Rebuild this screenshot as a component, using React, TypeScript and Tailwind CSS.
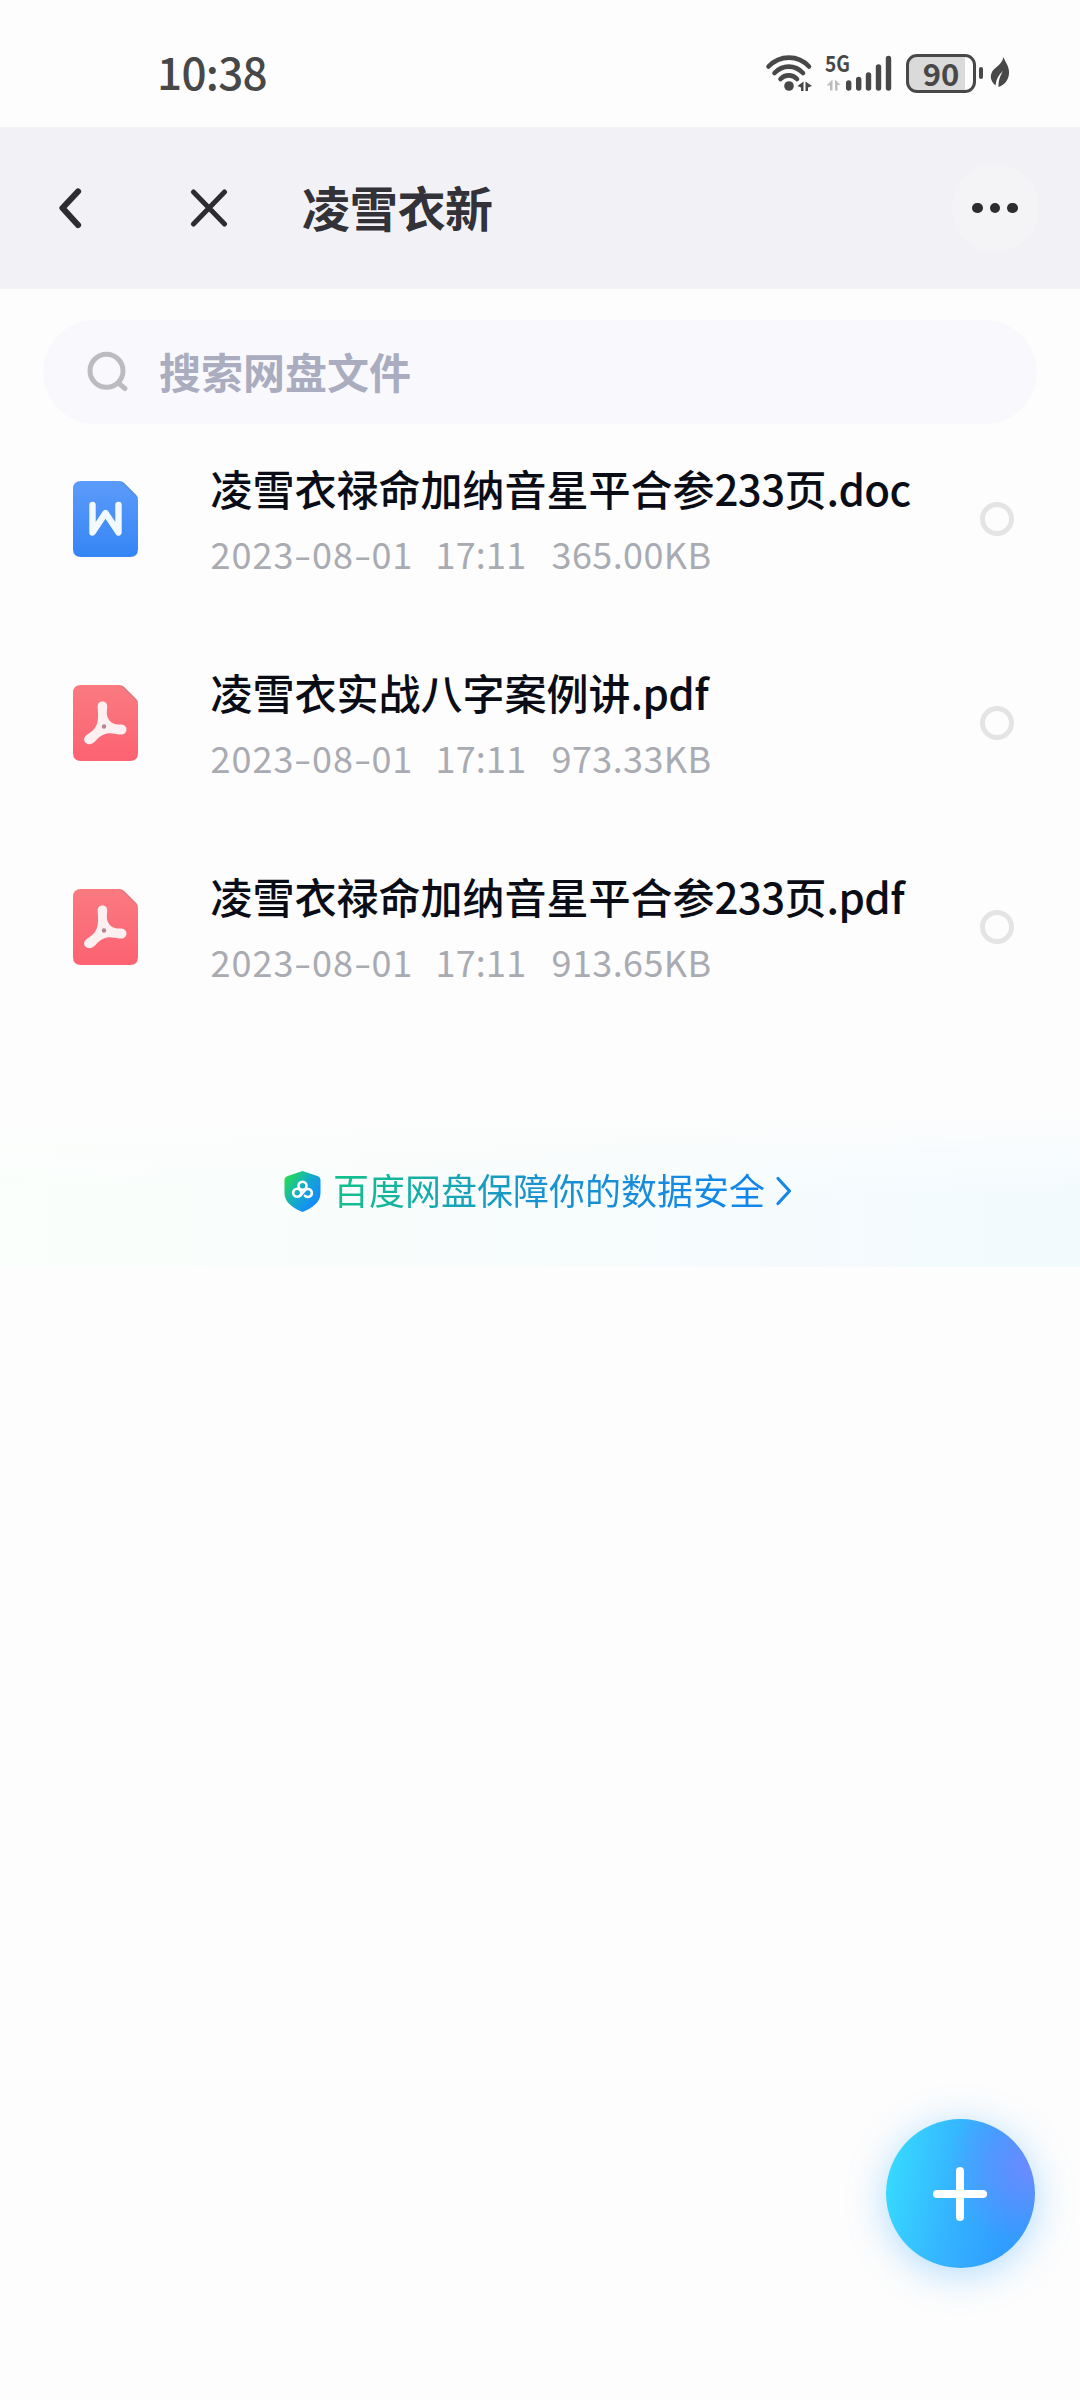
import React from 'react';

interface FileItem {
  name: string;
  kind: 'doc' | 'pdf';
  date: string;
  time: string;
  size: string;
}

const files: FileItem[] = [
  { name: '凌雪衣禄命加纳音星平合参233页.doc', kind: 'doc', date: '2023-08-01', time: '17:11', size: '365.00KB' },
  { name: '凌雪衣实战八字案例讲.pdf', kind: 'pdf', date: '2023-08-01', time: '17:11', size: '973.33KB' },
  { name: '凌雪衣禄命加纳音星平合参233页.pdf', kind: 'pdf', date: '2023-08-01', time: '17:11', size: '913.65KB' },
];

const WifiIcon = () => (
  <svg width="48" height="38" viewBox="0 0 48 38" fill="none" stroke="#484848" strokeWidth="4.6" strokeLinecap="round">
    <path d="M3.5 12.5C15 .6 33 .6 44 12.5" />
    <path d="M9.5 19C17.5 10.5 30 10.5 38 19" />
    <path d="M15.5 25C20 20.2 27.5 20.2 32 25" />
    <circle cx="24" cy="32" r="4.8" fill="#484848" stroke="none" />
    <path d="M38.500 27.500v9.500H36v-3.500l-3.500-1.500zM40.500 27.500l6.500 4.500-4 1.500V37h-2.500z" fill="#484848" stroke="none" />
  </svg>
);

const SignalIcon = () => (
  <svg className="overflow-visible" width="67" height="38" viewBox="0 0 67 38">
    <text x="-1" y="18" fontFamily="'Noto Sans CJK SC', sans-serif" fontSize="22.5" fontWeight="700" fill="#484848" textLength="25" lengthAdjust="spacingAndGlyphs">5G</text>
    <path d="M6.500 26v11H4v-5L.5 32zM9 26l5.500 5.500h-3V37H9z" fill="#bdbdbd" transform="translate(0 -.5)" />
    <g stroke="#484848" strokeWidth="5.4" strokeLinecap="round">
      <path d="M22.700 29v5M32.700 25.500V34M42.500 21v13M52.500 13v21M62.500 4.500V34" />
    </g>
  </svg>
);

const LeafIcon = () => (
  <svg width="21" height="30" viewBox="0 0 21 30">
    <path d="M13.500 0C15 5 19.500 9 19 16.500c-.4 7-5 11.500-10.500 13.500 0-7 1.500-11 4.500-16-4.500 4-7 8.500-7.500 14.500C1 24.500-.5 20 2 15 4.500 10 12 8 13.500 0z" fill="#484848" />
  </svg>
);

function StatusBar() {
  return (
    <div className="flex h-[127px] items-start justify-between pl-[157px] pr-[69px] text-[#484848]">
      <span className="mt-[39px] text-[44px] font-medium leading-[64px] tracking-[-0.7px]">10:38</span>
      <div className="flex items-start pt-[54px]">
        <WifiIcon />
        <div className="ml-[13px]">
          <SignalIcon />
        </div>
        <div className="ml-[13px] flex h-[39px] w-[70px] items-center justify-center rounded-[11px] border-[3px] border-[#484848] bg-[linear-gradient(90deg,#dadada_87%,#fdfdfd_87%)]">
          <span className="-mt-[3px] text-[31px] font-bold leading-[33px]">90</span>
        </div>
        <div className="ml-[3px] mt-[13px] h-[12px] w-[4px] rounded-full bg-[#484848]" />
        <div className="ml-[7px] mt-[3px]">
          <LeafIcon />
        </div>
      </div>
    </div>
  );
}

function NavBar() {
  return (
    <div className="flex h-[162px] items-center bg-[#f2f2f6] pl-[58px] pr-[41px]">
      <svg width="25" height="42" viewBox="0 0 25 42" fill="none" stroke="#2d2d2f" strokeWidth="6.2" strokeLinecap="round" strokeLinejoin="round">
        <path d="M20 4.500L4.500 21l15.500 17" />
      </svg>
      <svg className="ml-[107px]" width="38" height="38" viewBox="0 0 38 38" stroke="#2d2d2f" strokeWidth="5" strokeLinecap="round">
        <path d="M3.500 3l31 32M34.500 3l-31 32" />
      </svg>
      <h1 className="-mt-[4px] ml-[74px] text-[48px] font-bold leading-[60px] tracking-[-0.3px] text-[#323238]">凌雪衣新</h1>
      <div className="ml-auto flex h-[88px] w-[88px] items-center justify-center gap-[7px] rounded-full bg-[#f4f4f6]">
        <span className="h-[10.5px] w-[10.5px] rounded-full bg-[#2d2d2f]" />
        <span className="h-[10.5px] w-[10.5px] rounded-full bg-[#2d2d2f]" />
        <span className="h-[10.5px] w-[10.5px] rounded-full bg-[#2d2d2f]" />
      </div>
    </div>
  );
}

function SearchBox() {
  return (
    <div className="mx-[43px] mt-[31px] flex h-[104px] items-center rounded-full bg-[#f9f9fd] pl-[44px]">
      <svg width="42" height="42" viewBox="0 0 42 42" fill="none" stroke="#bcbcc0" strokeWidth="5" strokeLinecap="round">
        <circle cx="19.500" cy="19.800" r="16.500" />
        <path d="M32.500 33l5.500 4.500" />
      </svg>
      <span className="-mt-[3px] ml-[30px] text-[42px] font-bold leading-[60px] text-[#a9adbf]">搜索网盘文件</span>
    </div>
  );
}

const DocIcon = () => (
  <svg width="65" height="76" viewBox="0 0 65 76">
    <defs>
      <linearGradient id="doc" x1="0" y1="0" x2="0" y2="1">
        <stop offset="0" stopColor="#5c9bfb" />
        <stop offset="1" stopColor="#3585f5" />
      </linearGradient>
    </defs>
    <path d="M8 0h38q3 0 5 2l12 12q2 2 2 5v49q0 8-8 8H8q-8 0-8-8V8q0-8 8-8z" fill="url(#doc)" />
    <path d="M47 .2q2.500.4 4 1.800l12 12q1.600 1.600 2 4z" fill="#5590e2" />
    <path d="M19.500 24v27.500L32.500 32l13 19.500V24" fill="none" stroke="#f2faff" strokeWidth="6.4" strokeLinecap="round" strokeLinejoin="round" />
  </svg>
);

const PdfIcon = () => (
  <svg width="65" height="76" viewBox="0 0 65 76">
    <defs>
      <linearGradient id="pdf" x1="0" y1="0" x2="0" y2="1">
        <stop offset="0" stopColor="#fa7a80" />
        <stop offset="1" stopColor="#fc6272" />
      </linearGradient>
    </defs>
    <path d="M8 0h38q3 0 5 2l12 12q2 2 2 5v49q0 8-8 8H8q-8 0-8-8V8q0-8 8-8z" fill="url(#pdf)" />
    <path d="M47 .2q2.500.4 4 1.800l12 12q1.600 1.600 2 4z" fill="#df7880" />
    <path
      d="M29.500 16.500c3.500 0 5 2.600 4.700 6-.5 5-.8 8 1.300 11.500 2.200 4 5.500 5.500 11.500 5.500 4.500 0 6.500 2.100 6.500 5s-2.500 5.400-6.500 5c-5-.6-8.500-2-13-1-5.500 1.200-8.500 4-11.500 7.500-2.800 3.200-6.500 4.300-9.500 2-2.800-2.200-2.500-6 1-8.300 4-2.500 7.500-5 9.500-9.700 2-4.800 1.700-10 1.200-17.500-.2-4 1.500-6 4.800-6z"
      fill="#fdf0f0"
    />
    <circle cx="31" cy="41.500" r="2.200" fill="#b58593" />
  </svg>
);

// splits the name so that latin runs can be set a little tighter than the hanzi
function FileName({ name }: { name: string }) {
  return (
    <div className="mt-[3px] text-[42px] font-medium leading-[60px] text-[#0b0d16]">
      {name.split(/([a-z0-9.]+)/).map((part, i) =>
        i % 2 === 1 ? (
          <span key={i} className="tracking-[-0.6px]">{part}</span>
        ) : (
          part
        )
      )}
    </div>
  );
}

function FileDate({ date }: { date: string }) {
  return (
    <span className="w-[225px]">
      {date.split(/(-)/).map((part, i) =>
        part === '-' ? (
          <span key={i} className="inline-block w-[17.5px] scale-x-140 text-center tracking-normal">-</span>
        ) : (
          <span key={i}>{part}</span>
        )
      )}
    </span>
  );
}

function FileRow({ file }: { file: FileItem }) {
  return (
    <div className="flex h-[204px] items-start pl-[72.5px] pr-[66px]">
      <div className="mt-[26px] shrink-0">{file.kind === 'doc' ? <DocIcon /> : <PdfIcon />}</div>
      <div className="ml-[73px] flex-1 whitespace-nowrap">
        <FileName name={file.name} />
        <div className="mt-[9px] flex text-[36px] leading-[52px] tracking-[1px] text-[#a9abb2]">
          <FileDate date={file.date} />
          <span className="w-[116px] tracking-[0.2px]">{file.time}</span>
          <span className="tracking-[0.4px]">{file.size}</span>
        </div>
      </div>
      <div className="mt-[47px] h-[34px] w-[34px] shrink-0 rounded-full border-[5px] border-[#e4e4e5]" />
    </div>
  );
}

const ShieldIcon = () => (
  <svg className="mt-[5px]" width="37" height="41" viewBox="0 0 37 41">
    <defs>
      <linearGradient id="shield" x1="0" y1="0.1" x2="0.9" y2="0.8">
        <stop offset="0.1" stopColor="#22d860" />
        <stop offset="0.55" stopColor="#14a8d0" />
        <stop offset="1" stopColor="#1288ff" />
      </linearGradient>
    </defs>
    <path d="M18.500 0l15.500 5.300q2.500.9 2.500 3.700v13c0 9.500-8.500 15-18 19C9 37 .5 31.500.5 22V9q0-2.800 2.500-3.700z" fill="url(#shield)" />
    <g fill="none" stroke="#fff" strokeWidth="2.6" strokeLinecap="round">
      <circle cx="18.500" cy="14.700" r="4" />
      <circle cx="13.200" cy="21.800" r="4" />
      <path d="M16.500 24.500l4-4.700a4 4 0 1 1 .5 5" />
    </g>
  </svg>
);

function SafetyBanner() {
  return (
    <div className="mt-[44px] h-[156px] bg-[linear-gradient(180deg,#fdfdfd,#fdfdfd00_55%),linear-gradient(90deg,#fafffb,#f8fcfc_45%,#f2fafe)] pt-[52px]">
      <div className="flex h-[52px] items-center pl-[284px]">
        <ShieldIcon />
        <span className="ml-[12px] bg-[linear-gradient(100deg,#12c388,#1a94cc_45%,#1284ee)] bg-clip-text text-[36px] leading-[52px] text-transparent">
          百度网盘保障你的数据安全
        </span>
        <svg className="ml-[10px] mt-[4px]" width="18" height="32" viewBox="0 0 18 32" fill="none" stroke="#1787e6" strokeWidth="3.2" strokeLinecap="round" strokeLinejoin="round">
          <path d="M3 3.500L14.500 16 3 28.500" />
        </svg>
      </div>
    </div>
  );
}

function AddButton() {
  return (
    <button className="ml-[885.5px] mt-[852px] flex h-[149px] w-[149px] items-center justify-center rounded-full bg-[radial-gradient(circle_at_96%_32%,#6c8bff,#6c8bff00_46%),linear-gradient(100deg,#37dcff_3%,#35b4ff_45%,#2f9dff_80%)] shadow-[0_6px_38px_rgba(50,165,255,0.38)]">
      <svg width="56" height="56" viewBox="0 0 56 56" stroke="#fff" strokeWidth="8" strokeLinecap="round">
        <path d="M28 5v46M5 28h46" />
      </svg>
    </button>
  );
}

const App: React.FC = () => {
  return (
    <div className="h-[2400px] w-[1080px] overflow-hidden bg-[#fdfdfd] font-['Noto_Sans_CJK_SC',sans-serif]">
      <StatusBar />
      <NavBar />
      <SearchBox />
      <div className="mt-[31px]">
        {files.map((file) => (
          <FileRow key={file.name} file={file} />
        ))}
      </div>
      <SafetyBanner />
      <AddButton />
    </div>
  );
};

export default App;
